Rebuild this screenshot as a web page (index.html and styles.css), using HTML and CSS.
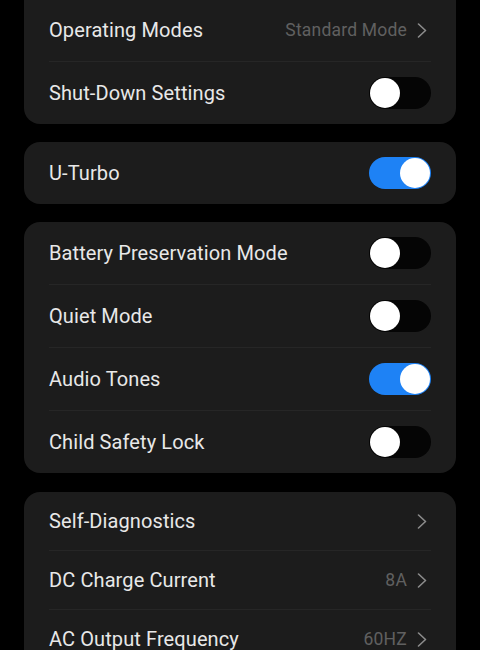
FILE: index.html
```html
<!DOCTYPE html>
<html lang="en">
  <head>
    <meta charset="UTF-8" />
    <meta name="viewport" content="width=device-width, initial-scale=1.0" />
    <title>Settings</title>
    <link rel="stylesheet" href="styles.css">
  </head>
  <body>
    <div id="wrap">
      <div class="card first">
        <div class="row">
          <span class="label">Operating Modes</span>
          <span class="value">Standard Mode
            <svg class="chev" viewBox="0 0 10 15"><polyline points="1.5,1 8.5,7.5 1.5,14" /></svg>
          </span>
        </div>
        <div class="row">
          <span class="label">Shut-Down Settings</span>
          <span class="toggle"></span>
        </div>
      </div>

      <div class="card">
        <div class="row">
          <span class="label">U-Turbo</span>
          <span class="toggle on"></span>
        </div>
      </div>

      <div class="card">
        <div class="row">
          <span class="label">Battery Preservation Mode</span>
          <span class="toggle"></span>
        </div>
        <div class="row">
          <span class="label">Quiet Mode</span>
          <span class="toggle"></span>
        </div>
        <div class="row">
          <span class="label">Audio Tones</span>
          <span class="toggle on"></span>
        </div>
        <div class="row">
          <span class="label">Child Safety Lock</span>
          <span class="toggle"></span>
        </div>
      </div>

      <div class="card compact">
        <div class="row">
          <span class="label">Self-Diagnostics</span>
          <span class="value">
            <svg class="chev" viewBox="0 0 10 15"><polyline points="1.5,1 8.5,7.5 1.5,14" /></svg>
          </span>
        </div>
        <div class="row">
          <span class="label">DC Charge Current</span>
          <span class="value">8A
            <svg class="chev" viewBox="0 0 10 15"><polyline points="1.5,1 8.5,7.5 1.5,14" /></svg>
          </span>
        </div>
        <div class="row">
          <span class="label">AC Output Frequency</span>
          <span class="value">60HZ
            <svg class="chev" viewBox="0 0 10 15"><polyline points="1.5,1 8.5,7.5 1.5,14" /></svg>
          </span>
        </div>
      </div>
    </div>
  </body>
</html>
```

FILE: styles.css
```css
body {
  margin: 0;
  background-color: #000;
  font-family: Roboto, "Noto Sans", sans-serif;
  color: #e8e8e8;
  overflow: hidden;
}

#wrap {
  display: flex;
  flex-direction: column;
  gap: 18px;
  padding: 0 24px;
}

.card {
  background-color: #1c1c1c;
  border-radius: 16px;
}
.card.first {
  margin-top: -18px;
  padding-top: 16px;
}
.card.first .row:first-child {
  border-top: 1px solid #262626;
}
.card.compact {
  margin-top: 1px;
}

.row {
  height: 62px;
  margin: 0 25px;
  display: flex;
  align-items: center;
  justify-content: space-between;
}
.row + .row {
  border-top: 1px solid #262626;
}
.card.compact .row {
  height: 58px;
}

.label {
  font-size: 20px;
  letter-spacing: 0.1px;
}

.value {
  display: flex;
  align-items: center;
  gap: 10px;
  font-size: 17.5px;
  letter-spacing: 0.2px;
  color: #606060;
}

.chev {
  width: 10px;
  height: 15px;
  margin-right: 4px;
}
.chev polyline {
  fill: none;
  stroke: #8c8c8c;
  stroke-width: 1.6;
  stroke-linecap: round;
  stroke-linejoin: round;
}

.toggle {
  width: 62px;
  height: 32px;
  border-radius: 16px;
  background-color: #050505;
  position: relative;
}
.toggle::after {
  content: "";
  position: absolute;
  top: 1px;
  left: 1px;
  width: 30px;
  height: 30px;
  border-radius: 50%;
  background-color: #fff;
}
.toggle.on {
  background-color: #1e82f5;
}
.toggle.on::after {
  left: 31px;
}
```
